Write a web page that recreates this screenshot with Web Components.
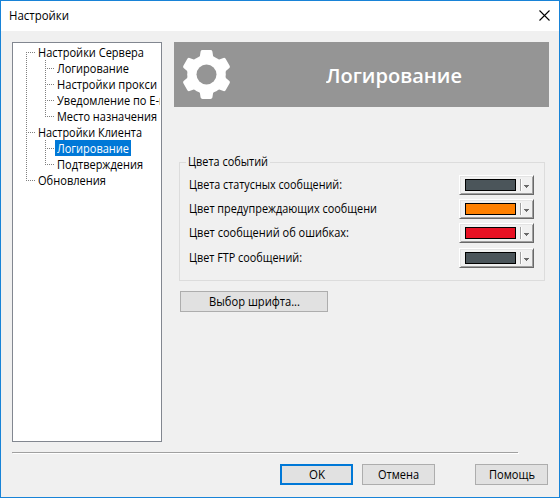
<!DOCTYPE html>
<html lang="ru"><head><meta charset="utf-8"><title>Настройки</title>
<style>
html,body{margin:0;width:560px;height:498px;overflow:hidden}
body{font:12px/16px "Open Sans","Noto Sans",sans-serif;color:#000}
</style></head><body>
<settings-window></settings-window>
<script>
const define=(name,html,init)=>customElements.define(name,class extends HTMLElement{
  connectedCallback(){
    if(this.shadowRoot)return;
    const t=document.createElement('template');t.innerHTML=html;
    this.attachShadow({mode:'open'}).append(t.content.cloneNode(true));
    if(init)init(this,this.shadowRoot);
  }
});

// A text run condensed horizontally to the width in "w".
define('fit-text',`<style>:host{display:inline-block;white-space:pre}span{display:inline-block;transform-origin:0 0}</style><span><slot></slot></span>`,(el,r)=>{
  const s=r.querySelector('span'),w=+el.getAttribute('w');
  if(w){s.style.transform=`scaleX(${w/s.getBoundingClientRect().width})`;el.style.width=w+'px';}
});

define('title-bar',`<style>
:host{display:flex;justify-content:space-between;height:30px;background:#fff;padding:0 9px 0 8px;box-sizing:border-box}
.t{margin-top:7px}svg{width:11px;height:11px;margin-top:9px}
</style><div class="t"><slot></slot></div>
<svg viewBox="0 0 11 11"><path d="M.5 .5l10 10M10.5 .5l-10 10" stroke="#000" stroke-width="1.1" fill="none"/></svg>`);

define('tree-node',`<style>
:host{display:block;--dx:repeating-linear-gradient(90deg,#808080 0 1px,transparent 1px 2px);--dy:repeating-linear-gradient(#808080 0 1px,transparent 1px 2px)}
.row{display:flex;height:16px;background:var(--dy) 0 0/1px 100% no-repeat,var(--dx) 0 8px/10px 1px no-repeat}
:host([first]) .row{background:var(--dy) 0 8px/1px 100% no-repeat,var(--dx) 0 8px/10px 1px no-repeat}
:host([last]) .row{background:var(--dy) 0 0/1px 9px no-repeat,var(--dx) 0 8px/10px 1px no-repeat}
.label{box-sizing:border-box;height:16px;line-height:17px;margin-left:10px;padding:0 2px;white-space:nowrap;flex:none}
:host([selected]) .label{background:#0078d7;color:#fff}
.kids{padding-left:19px;background:var(--dy) 0 0/1px 100% no-repeat}
</style><div class="row"><div class="label"><fit-text></fit-text></div></div><div class="kids"><slot></slot></div>`,(el,r)=>{
  const f=r.querySelector('fit-text');
  const g=document.createElement('fit-text');g.setAttribute('w',el.getAttribute('w'));g.textContent=el.getAttribute('label');f.replaceWith(g);
});

define('tree-panel',`<style>:host{display:block;box-sizing:border-box;width:150px;height:400px;border:1px solid #828790;background:#fff;padding:1px 1px 0 13px;overflow:hidden}
.clip{overflow:hidden;width:134px}</style><div class="clip"><slot></slot></div>`);

define('page-banner',`<style>
:host{display:flex;align-items:center;box-sizing:border-box;width:375px;height:65px;background:#959595;color:#fff;padding-left:8px}
svg{width:49px;height:51px;flex:none}
.t{font:600 20px/28px "Open Sans","Noto Sans",sans-serif;margin:2px 0 0 95px}
</style><svg viewBox="-24.5 -25.5 49 51"><g fill="#fff"><g id="teeth"></g><circle r="19.3" /></g><circle r="10" fill="#959595"/></svg><div class="t"><slot></slot></div>`,(el,r)=>{
  const g=r.querySelector('#teeth');
  for(let a=0;a<360;a+=60){
    const p=document.createElementNS('http://www.w3.org/2000/svg','path');
    p.setAttribute('d','M-8 -16L-6.6 -18.5L-5.9 -23Q-5.5 -24.4 -4 -24.4H4Q5.5 -24.4 5.9 -23L6.6 -18.5L8 -16Z');
    p.setAttribute('transform',`rotate(${a})`);g.append(p);
  }
});

define('group-box',`<style>
:host{display:block}
fieldset{box-sizing:border-box;width:366px;height:127px;border:1px solid #dcdcdc;margin:0;padding:0;min-width:0}
legend{margin-left:6px;padding:0 2px;height:16px}
.body{display:flex;flex-direction:column;gap:4px;padding:5px 10px 0 9px}
</style><fieldset><legend><slot name="legend"></slot></legend><div class="body"><slot></slot></div></fieldset>`);

define('color-row',`<style>:host{display:flex;justify-content:space-between;height:20px}
.l{margin-top:2px;white-space:nowrap}
.b{box-sizing:border-box;width:75px;height:20px;border:1px solid;border-color:#fff #696969 #696969 #fff;box-shadow:inset 1px 1px #e3e3e3,inset -1px -1px #a0a0a0;display:flex;padding:3px 0 0 5px}
.c{box-sizing:border-box;width:51px;height:12px;border:1px solid #000;background:var(--swatch)}
.s{width:1px;height:12px;margin-left:4px;background:#a0a0a0;box-shadow:1px 0 #fff}
svg{width:5px;height:3px;margin:6px 0 0 3px}
</style><div class="l"><slot></slot></div><div class="b"><div class="c"></div><div class="s"></div><svg viewBox="0 0 5 3" shape-rendering="crispEdges"><path d="M0 0h5v1H4v1H3v1H2V2H1V1H0z" fill="#696969"/></svg></div>`);

define('push-button',`<style>:host{display:flex;justify-content:center;box-sizing:border-box;width:73px;height:21px;border:1px solid #adadad;background:#e1e1e1;line-height:19px}
:host([wide]){width:148px}:host([primary]){border:2px solid #0078d7;line-height:17px}</style><slot></slot>`);

define('settings-window',`<style>
:host{display:block;box-sizing:border-box;width:560px;height:498px;border:1px solid #1883d7;background:#f0f0f0}
.main{display:flex;gap:12px;padding:11px 0 0 11px}
.page{display:flex;flex-direction:column}
group-box{margin:47px 0 0 5px}
push-button[wide]{margin:10px 0 0 6px}
.line{width:506px;height:1px;margin:10px 0 0 11px;background:#a0a0a0;box-shadow:1px 1px #fff}
.foot{display:flex;justify-content:flex-end;padding:11px 11px 0 0}
.foot push-button+push-button{margin-left:9px}
.foot push-button:last-child{margin-left:40px}
</style>
<title-bar><fit-text w="60">Настройки</fit-text></title-bar>
<div class="main">
<tree-panel>
<tree-node first label="Настройки Сервера" w="106">
<tree-node label="Логирование" w="72"></tree-node>
<tree-node label="Настройки прокси" w="100"></tree-node>
<tree-node label="Уведомление по E-mail" w="124"></tree-node>
<tree-node last label="Место назначения" w="100"></tree-node>
</tree-node>
<tree-node label="Настройки Клиента" w="104">
<tree-node selected label="Логирование" w="72"></tree-node>
<tree-node last label="Подтверждения" w="86"></tree-node>
</tree-node>
<tree-node last label="Обновления" w="68"></tree-node>
</tree-panel>
<div class="page">
<page-banner><fit-text w="136">Логирование</fit-text></page-banner>
<group-box><fit-text slot="legend" w="80">Цвета событий</fit-text>
<color-row style="--swatch:#4b555a"><fit-text w="153">Цвета статусных сообщений:</fit-text></color-row>
<color-row style="--swatch:#ff8000"><fit-text w="188">Цвет предупреждающих сообщени</fit-text></color-row>
<color-row style="--swatch:#e81123"><fit-text w="160">Цвет сообщений об ошибках:</fit-text></color-row>
<color-row style="--swatch:#4b555a;margin-top:1px"><fit-text w="113">Цвет FTP сообщений:</fit-text></color-row>
</group-box>
<push-button wide><fit-text w="91">Выбор шрифта...</fit-text></push-button>
</div></div>
<div class="line"></div>
<div class="foot"><push-button primary><fit-text w="16">OK</fit-text></push-button><push-button><fit-text w="41">Отмена</fit-text></push-button><push-button><fit-text w="46">Помощь</fit-text></push-button></div>`);
</script></body></html>
